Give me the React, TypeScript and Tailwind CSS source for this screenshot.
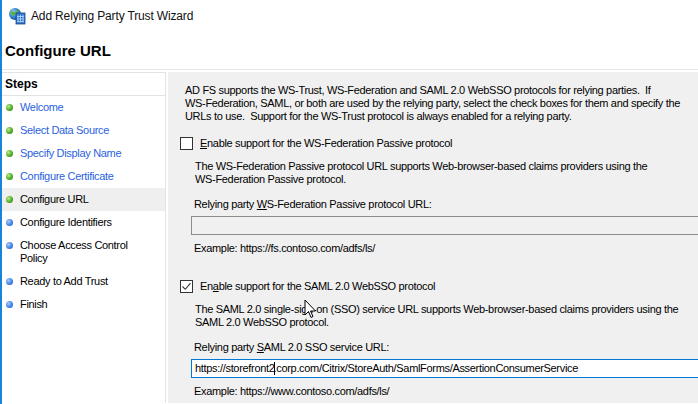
import { ReactNode } from "react";

const steps = [
  { label: "Welcome", done: true },
  { label: "Select Data Source", done: true },
  { label: "Specify Display Name", done: true },
  { label: "Configure Certificate", done: true },
  { label: "Configure URL", done: true, current: true },
  { label: "Configure Identifiers" },
  { label: "Choose Access Control Policy", wrap: true },
  { label: "Ready to Add Trust" },
  { label: "Finish" },
];

function WizardIcon() {
  return (
    <svg width="18" height="18" viewBox="0 0 18 18">
      <defs>
        <radialGradient id="globe" cx="0.35" cy="0.35" r="0.7">
          <stop offset="0" stopColor="#9fd6ff" />
          <stop offset="0.6" stopColor="#2f7fd0" />
          <stop offset="1" stopColor="#1b4f9a" />
        </radialGradient>
      </defs>
      <circle cx="7" cy="7" r="6" fill="url(#globe)" />
      <path d="M3 4c1.5 0 2 1 3.5 1S8 7 6.5 8 4 9 3.5 7.5 2 4.5 3 4z" fill="#5fb233" />
      <path d="M8 2.5c1 .5 2.5 1 2.5 2.5S9 6 8.5 5 7 3 8 2.5z" fill="#5fb233" />
      <rect x="8" y="6" width="9" height="11" fill="#2c6fc4" stroke="#1a4b8c" strokeWidth="0.8" />
      <path d="M10 7.5v8M12.5 7.5v8M15 7.5v8M9 9.5h7M9 12h7M9 14.5h7" stroke="#a8d4ff" strokeWidth="0.9" />
    </svg>
  );
}

function Bullet({ done }: { done?: boolean }) {
  return (
    <span
      className={`mt-[3px] h-[7px] w-[7px] shrink-0 rounded-full ${
        done
          ? "bg-[radial-gradient(circle_at_35%_35%,#b6ec8a,#4aa521_60%,#2f7d12)]"
          : "bg-[radial-gradient(circle_at_35%_35%,#a9cdfb,#3b7ce6_60%,#1d53b8)]"
      }`}
    />
  );
}

function Checkbox({ checked }: { checked?: boolean }) {
  return (
    <span className="flex h-[13px] w-[13px] shrink-0 items-center justify-center border border-[#333333] bg-white">
      {checked && (
        <svg width="11" height="11" viewBox="0 0 11 11">
          <path d="M1.5 5.5l2.8 2.8L9.5 2.2" fill="none" stroke="#333333" strokeWidth="1.1" />
        </svg>
      )}
    </span>
  );
}

function Section({
  label,
  desc,
  urlLabel,
  example,
  checked,
  input,
}: {
  label: ReactNode;
  desc: ReactNode;
  urlLabel: ReactNode;
  example: string;
  checked?: boolean;
  input: ReactNode;
}) {
  return (
    <div className="flex flex-col">
      <div className="flex h-[13px] items-center gap-[7px]">
        <Checkbox checked={checked} />
        <span>{label}</span>
      </div>
      <p className="ml-[15px] mt-[10px] whitespace-nowrap">{desc}</p>
      <p className="ml-[14px] mt-[12px] whitespace-nowrap">{urlLabel}</p>
      <div className="ml-[11px] mt-[5px]">{input}</div>
      <p className="ml-[14px] mt-[7px]">{example}</p>
    </div>
  );
}

export default function App() {
  return (
    <div className="relative h-[404px] w-[698px] overflow-hidden border-l-2 border-[#1883d7] bg-white font-['Liberation_Sans',Arial,sans-serif] text-[11px] leading-[13px] tracking-[-0.32px] text-black">
      {/* Title bar */}
      <div className="flex h-[32px] items-center gap-[5px] pl-[6px]">
        <WizardIcon />
        <span className="text-[12px] tracking-[-0.15px] text-[#111]">Add Relying Party Trust Wizard</span>
      </div>

      {/* Page header */}
      <div className="flex h-[38px] items-center border-b border-[#e6e6e6] pl-[3px]">
        <h1 className="text-[15px] font-bold tracking-normal">Configure URL</h1>
      </div>

      <div className="flex h-[333px] pt-[2px]">
        {/* Steps */}
        <div className="w-[164px] shrink-0 border-r border-t border-[#e3e3e3] bg-white">
          <div className="flex h-[23px] items-center border-b border-[#e3e3e3] pl-[3px] text-[12px] font-bold tracking-normal">
            Steps
          </div>
          <ul>
            {steps.map((s) => (
              <li
                key={s.label}
                className={`flex gap-[7px] py-[5px] pl-[4px] ${s.current ? "bg-[#efefef]" : ""}`}
              >
                <Bullet done={s.done} />
                <span
                  className={`${s.done && !s.current ? "text-[#2a62e0]" : "text-black"} ${
                    s.wrap ? "w-[120px]" : "whitespace-nowrap"
                  }`}
                >
                  {s.label}
                </span>
              </li>
            ))}
          </ul>
        </div>

        {/* Content */}
        <div className="ml-[2px] flex-1 border-t border-[#f0f0f0] bg-[#f0f0f0] pl-[12px] pt-[11px]">
          <p className="ml-[5px] whitespace-nowrap">
            AD FS supports the WS-Trust, WS-Federation and SAML 2.0 WebSSO protocols for relying parties.&nbsp; If
            <br />
            WS-Federation, SAML, or both are used by the relying party, select the check boxes for them and specify the
            <br />
            URLs to use.&nbsp; Support for the WS-Trust protocol is always enabled for a relying party.
          </p>

          <div className="mt-[14px]">
            <Section
              label={
                <>
                  <u>E</u>nable support for the WS-Federation Passive protocol
                </>
              }
              desc={
                <>
                  The WS-Federation Passive protocol URL supports Web-browser-based claims providers using the
                  <br />
                  WS-Federation Passive protocol.
                </>
              }
              urlLabel={
                <>
                  Relying party <u>W</u>S-Federation Passive protocol URL:
                </>
              }
              input={<div className="h-[19px] w-[620px] border border-[#8c8c8c] bg-[#f0f0f0]" />}
              example="Example: https://fs.contoso.com/adfs/ls/"
            />
          </div>

          <div className="mt-[25px]">
            <Section
              checked
              label={
                <>
                  En<u>a</u>ble support for the SAML 2.0 WebSSO protocol
                </>
              }
              desc={
                <>
                  The SAML 2.0 single-sign-on (SSO) service URL supports Web-browser-based claims providers using the
                  <br />
                  SAML 2.0 WebSSO protocol.
                </>
              }
              urlLabel={
                <>
                  Relying party <u>S</u>AML 2.0 SSO service URL:
                </>
              }
              input={
                <div className="flex h-[19px] w-[620px] items-center whitespace-nowrap border border-[#0078d7] bg-white pl-[3px]">
                  https://storefront2
                  <span className="mx-[-1px] inline-block h-[13px] w-px bg-black" />
                  .corp.com/Citrix/StoreAuth/SamlForms/AssertionConsumerService
                </div>
              }
              example="Example: https://www.contoso.com/adfs/ls/"
            />
          </div>
        </div>
      </div>

      {/* Mouse pointer */}
      <svg className="absolute left-[302px] top-[299px]" width="13" height="20" viewBox="0 0 13 20">
        <path d="M1 1v15l3.5-3.5 2.5 6 2-1-2.5-5.5H11.5z" fill="white" stroke="black" strokeWidth="1" strokeLinejoin="round" />
      </svg>
    </div>
  );
}
